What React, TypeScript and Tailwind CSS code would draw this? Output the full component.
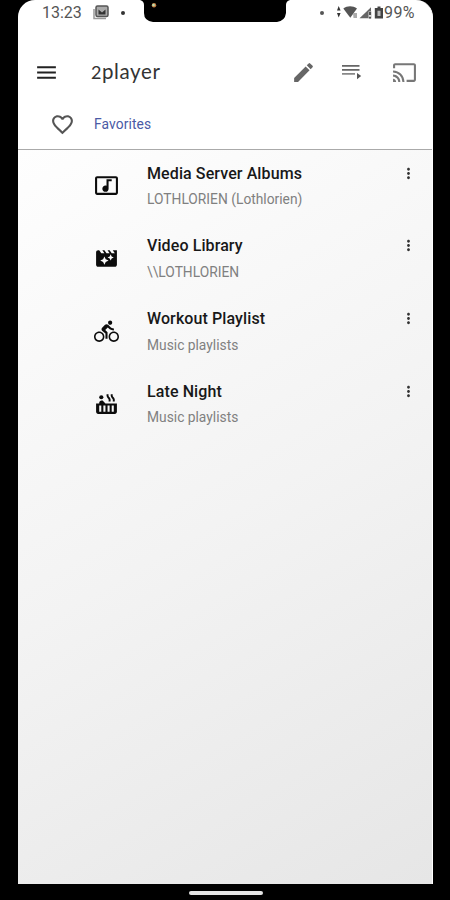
import type { IconType } from "react-icons";
import {
  MdCast,
  MdDirectionsBike,
  MdEdit,
  MdFavoriteBorder,
  MdHotTub,
  MdMenu,
  MdMoreVert,
  MdMovieFilter,
  MdMusicVideo,
} from "react-icons/md";

type Favorite = {
  title: string;
  subtitle: string;
  icon: IconType;
};

const favorites: Favorite[] = [
  { title: "Media Server Albums", subtitle: "LOTHLORIEN (Lothlorien)", icon: MdMusicVideo },
  { title: "Video Library", subtitle: "\\\\LOTHLORIEN", icon: MdMovieFilter },
  { title: "Workout Playlist", subtitle: "Music playlists", icon: MdDirectionsBike },
  { title: "Late Night", subtitle: "Music playlists", icon: MdHotTub },
];

const StatusBar = () => (
  <div className="relative flex h-[27px] justify-between pl-[24px] pr-[16px] text-[#555]">
    <div className="flex h-[26px] items-center">
      <span className="w-[42px] text-[16px]">13:23</span>
      {/* Screenshot notification */}
      <svg className="ml-[8px] h-[16px] w-[18px]" viewBox="0 0 18 16">
        <path d="M2 4v9.5h12" fill="none" stroke="#999" strokeWidth="1.5" />
        <rect x="4" y="1" width="12" height="10.5" rx="1.5" fill="#aaa" stroke="#555" strokeWidth="1.5" />
        <path d="M6.5 9.5v-5l3.5 3 3.5-3v5z" fill="#333" />
      </svg>
      <span className="ml-[11px] size-[4px] rounded-full bg-[#333]" />
    </div>

    <div className="flex h-[26px] items-center">
      <span className="mr-[13px] size-[4px] rounded-full bg-[#555]" />
      <svg className="h-[14px] w-[46px]" viewBox="0 0 46 14">
        <path d="M1.7 0l1.9 4.5H0zM1.7 11.5L0 7h3.6z" fill="#333" />
        <path d="M6.3 2.6c4-3.2 9.5-3.2 13.7 0L13.3 11.8z" fill="#555" />
        <path d="M16 7h4v5h-3.5z" fill="#aaa" />
        <path d="M22.5 12.3L34 1.2v11.1z" fill="#666" />
        <path d="M31.5 5.5H35v7h-3.5z" fill="#ddd" />
        <path d="M33 6v3M33 10.8v1.6" stroke="#222" strokeWidth="1.5" />
        <path d="M37.8 2H40.5V.5h3V2H46v10.5h-8.2z" fill="#444" />
        <path d="M40.5 4.8h3V10h-3z" fill="#bbb" />
      </svg>
      <span className="ml-[1px] w-[32px] whitespace-nowrap text-[16px] tracking-[0.4px]">99%</span>
    </div>

    {/* Camera notch */}
    <svg className="absolute left-[122px] top-0 h-[22px] w-[150px]" viewBox="0 0 150 22">
      <path d="M0 0Q4 1 4 5v8q0 8 9 9h124q8-1 9-9V5q0-4 4-5z" />
      <circle cx="14" cy="5.3" r="2.2" fill="#c98245" />
      <circle cx="13.5" cy="5" r="1.3" fill="#b8deb0" />
    </svg>
  </div>
);

const PlaylistIcon = () => (
  <svg className="h-[16px] w-[20px]" viewBox="0 0 20 16">
    <path d="M0 1.8h17.5M0 5.8h17.5" stroke="#666" strokeWidth="1.7" />
    <path d="M0 9.8h13" stroke="#888" strokeWidth="1.7" />
    <path d="M15 9l4.2 3.1-4.2 3.1z" fill="#555" />
  </svg>
);

const Toolbar = () => (
  <header className="flex h-[90px] items-center pl-[16px] pr-[15px]">
    <MdMenu className="size-[25px] text-[#222]" />
    <h1 className="-mt-px ml-[32px] flex w-[90px] items-baseline font-[Lato] text-[#333]">
      <span className="w-[11px] text-[18px]">2</span>
      <span className="text-[20.5px] tracking-[0.6px]">player</span>
    </h1>
    <MdEdit className="ml-auto size-[25px] text-[#666]" />
    <div className="ml-[26px] mr-[30px]">
      <PlaylistIcon />
    </div>
    <MdCast className="size-[25px] text-[#777]" />
  </header>
);

const FavoriteRow = ({ title, subtitle, icon: Icon }: Favorite) => (
  <li className="flex h-[72.8px]">
    <Icon className="ml-[76px] mt-[23px] size-[25px] shrink-0 text-[#0c0c0c]" />
    <div className="ml-[28px] flex-1 whitespace-nowrap">
      <p className="mt-[11.6px] text-[16px] font-medium leading-[24px] tracking-[0.1px] text-[#181818]">{title}</p>
      <p className="mt-[2.4px] text-[13.8px] leading-[22px] text-[#808080]">{subtitle}</p>
    </div>
    <MdMoreVert className="mr-[15px] mt-[14.6px] size-[17px] text-[#333]" />
  </li>
);

const App = () => {
  return (
    <div className="flex h-[900px] w-[450px] flex-col bg-black pl-[18px] pr-[17px] font-[Roboto,sans-serif]">
      <main className="flex h-[884px] flex-col overflow-hidden rounded-t-[17px] border-r border-white bg-white">
        <StatusBar />
        <Toolbar />
        <div className="flex h-[33px] items-center border-b border-[#aaa] pb-[17px]">
          <MdFavoriteBorder className="ml-[32px] size-[25px] text-[#555]" />
          <span className="ml-[19px] text-[13.8px] tracking-[0.1px] text-[#4a5aa5]">Favorites</span>
        </div>
        <ul className="flex-1 bg-linear-150 from-[#fefefe] via-[#f3f3f3] to-[#e6e6e6]">
          {favorites.map((item) => (
            <FavoriteRow key={item.title} {...item} />
          ))}
        </ul>
      </main>
      <div className="mx-auto mt-[7px] h-[4px] w-[74px] rounded-full bg-[#e4e4e4]" />
    </div>
  );
};

export default App;
